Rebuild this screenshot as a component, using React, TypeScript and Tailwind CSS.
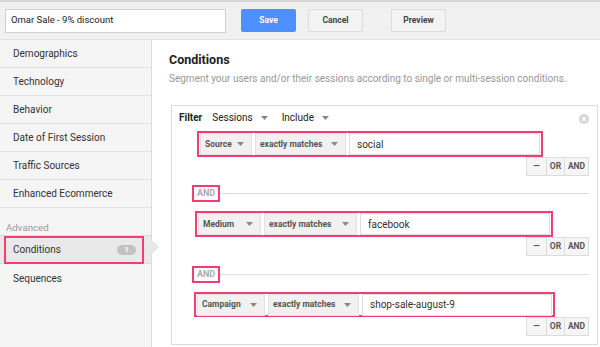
import React from 'react';

const PINK = 'border-[#f23d77]';

const Caret = () => (
    <svg width="7" height="4" viewBox="0 0 7 4" className="shrink-0">
        <path d="M0 0 L7 0 L3.5 4 Z" fill="#888" />
    </svg>
);

const Dropdown = ({ label, width }: { label: string; width: string }) => (
    <div className={`${width} h-[22px] bg-[#f1f1f1] border border-[#e2e2e2] flex items-center justify-between pl-[4px] pr-[7px] text-[8.5px] font-bold text-[#555] whitespace-nowrap`}>
        <span>{label}</span>
        <Caret />
    </div>
);

const Condition = ({ field, fieldW, opW, value, boxW, ml, h }: { field: string; fieldW: string; opW: string; value: string; boxW: string; ml: string; h: string }) => (
    <div className={`${boxW} ${ml} ${h} border-2 ${PINK} flex items-center gap-[3px] px-[1px]`}>
        <Dropdown label={field} width={fieldW} />
        <Dropdown label="exactly matches" width={opW} />
        <div className="flex-1 h-[22px] border border-[#ddd] bg-white flex items-center pl-[7px] text-[10px] text-[#333]">{value}</div>
    </div>
);

const RowButtons = () => (
    <div className="flex justify-end pr-[8px]">
        <div className="flex h-[19px] border border-[#ddd] bg-[#f5f5f5] text-[8.5px] font-bold text-[#555]">
            <div className="w-[20px] flex items-center justify-center border-r border-[#ddd]">—</div>
            <div className="w-[18px] flex items-center justify-center border-r border-[#ddd]">OR</div>
            <div className="w-[23px] flex items-center justify-center">AND</div>
        </div>
    </div>
);

const AndSeparator = () => (
    <div className="flex items-center pl-[20px] pr-[8px]">
        <div className={`w-[28px] h-[17px] border-2 ${PINK} flex items-center justify-center text-[9px] font-bold text-[#aaa]`}>AND</div>
        <div className="flex-1 h-px bg-[#ddd]"></div>
    </div>
);

const sideItems = ['Demographics', 'Technology', 'Behavior', 'Date of First Session', 'Traffic Sources', 'Enhanced Ecommerce'];

export default function App() {
    return (
        <div className="w-[600px] h-[347px] overflow-hidden bg-white text-[#333]" style={{ fontFamily: 'Roboto, "Liberation Sans", sans-serif' }}>
            {/* Top bar */}
            <div className="h-[40px] bg-[#f1f1f1] border-t-2 border-[#d6d6d6] border-b border-b-[#e2e2e2] flex items-center pl-[5px]">
                <div className="w-[221px] h-[24px] bg-white border border-[#d0d0d0] flex items-center pl-[5px] text-[9.5px] text-[#222]">Omar Sale - 9% discount</div>
                <button className="ml-[15px] w-[55px] h-[23px] bg-[#4d90fe] rounded-[2px] text-white text-[8.5px] font-bold">Save</button>
                <button className="ml-[12px] w-[55px] h-[23px] bg-[#f3f3f3] border border-[#dcdcdc] rounded-[2px] text-[#444] text-[8.5px] font-bold">Cancel</button>
                <button className="ml-[28px] w-[55px] h-[23px] bg-[#f3f3f3] border border-[#dcdcdc] rounded-[2px] text-[#444] text-[8.5px] font-bold">Preview</button>
            </div>

            <div className="flex h-[307px]">
                {/* Sidebar */}
                <div className="relative w-[152px] shrink-0 bg-[#f5f5f5] border-r border-[#dcdcdc]">
                    {sideItems.map((s) => (
                        <div key={s} className="h-[28px] border-b border-[#e0e0e0] flex items-center pl-[13px] text-[10px] text-[#333]">{s}</div>
                    ))}
                    <div className="mt-[14px] pl-[6px] text-[9.7px] leading-[12px] text-[#999]">Advanced</div>
                    <div className="mt-[1px] h-[29px] bg-[#e9e9e9] border-y border-[#dcdcdc] flex items-center px-[4px]">
                        <div className={`w-[140px] h-[28px] border-2 ${PINK} flex items-center justify-between pl-[7px] pr-[6px] text-[10px] text-[#333]`}>
                            <span>Conditions</span>
                            <span className="w-[19px] h-[10px] rounded-full bg-[#c2c2c2] text-white text-[8px] font-bold flex items-center justify-center">1</span>
                        </div>
                    </div>
                    <div className="h-[28px] flex items-center pl-[13px] text-[10px] text-[#333]">Sequences</div>
                    <svg width="8" height="14" viewBox="0 0 8 14" className="absolute left-[151px] top-[200px]">
                        <path d="M0 0 L7 7 L0 14 Z" fill="#e9e9e9" />
                        <path d="M0 0 L7 7 L0 14" fill="none" stroke="#dcdcdc" strokeWidth="1" />
                    </svg>
                </div>

                {/* Main */}
                <div className="flex-1 pl-[17px]">
                    <div className="mt-[12px] text-[12.5px] font-bold text-[#222] leading-[16px]">Conditions</div>
                    <div className="mt-[4px] text-[10px] text-[#999] leading-[13px] whitespace-nowrap">Segment your users and/or their sessions according to single or multi-session conditions.</div>

                    <div className="mt-[20px] ml-[2px] w-[427px] h-[240px] border border-[#dcdcdc] relative">
                        <div className="h-[23px] flex items-center pl-[7px] text-[10px] text-[#222]">
                            <span className="font-bold">Filter</span>
                            <span className="ml-[10px]">Sessions</span>
                            <span className="ml-[8px]"><Caret /></span>
                            <span className="ml-[14px]">Include</span>
                            <span className="ml-[8px]"><Caret /></span>
                        </div>
                        <svg width="10" height="10" viewBox="0 0 10 10" className="absolute right-[8px] top-[8px]">
                            <circle cx="5" cy="5" r="5" fill="#d4d4d4" />
                            <path d="M3 3 L7 7 M7 3 L3 7" stroke="#fff" strokeWidth="1.2" />
                        </svg>

                        <div className="mt-[2px]">
                            <Condition field="Source" fieldW="w-[52px]" opW="w-[91px]" value="social" boxW="w-[346px]" ml="ml-[25px]" h="h-[26px]" />
                        </div>
                        <RowButtons />
                        <div className="mt-[9px]"><AndSeparator /></div>
                        <div className="mt-[9px]">
                            <Condition field="Medium" fieldW="w-[63px]" opW="w-[93px]" value="facebook" boxW="w-[358px]" ml="ml-[23px]" h="h-[26px]" />
                        </div>
                        <RowButtons />
                        <div className="mt-[10px]"><AndSeparator /></div>
                        <div className="mt-[9px]">
                            <Condition field="Campaign" fieldW="w-[68px]" opW="w-[91px]" value="shop-sale-august-9" boxW="w-[361px]" ml="ml-[22px]" h="h-[25px]" />
                        </div>
                        <RowButtons />
                    </div>
                </div>
            </div>
        </div>
    );
}
